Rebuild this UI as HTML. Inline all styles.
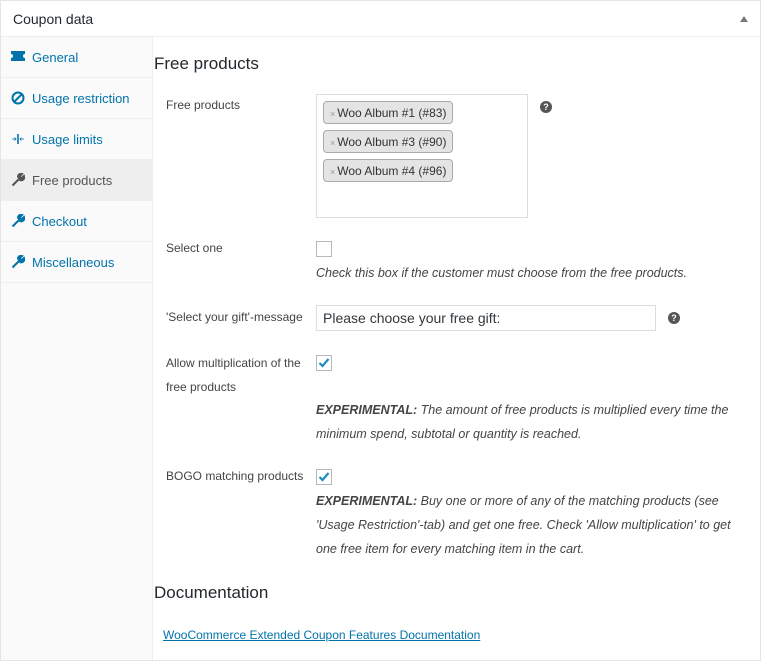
<!DOCTYPE html>
<html><head><meta charset="utf-8"><style>
*{box-sizing:border-box;margin:0;padding:0}
body{width:761px;height:661px;background:#f1f1f1;font-family:"Liberation Sans",sans-serif;color:#444;font-size:12px;position:relative;overflow:hidden}
.box{position:absolute;left:0;top:0;width:761px;height:661px;background:#fff;border:1px solid #e5e5e5}
.hdr{position:absolute;left:0;top:0;width:759px;height:36px;border-bottom:1px solid #eee;font-size:14px;color:#23282d;padding:10px 12px}
.tri{position:absolute;right:12px;top:15px;width:0;height:0;border-left:4px solid transparent;border-right:4px solid transparent;border-bottom:6px solid #777}
.side{position:absolute;left:0;top:36px;width:152px;height:623px;background:#fafafa;border-right:1px solid #eee}
.it{height:41px;border-bottom:1px solid #eee;color:#0073aa;font-size:13px;padding:13px 0 0 31px;position:relative}
.it.act{background:#eee;color:#555}
.it svg{position:absolute;left:10px;top:13px}
.a{position:absolute;white-space:nowrap}
h2{position:absolute;font-size:17px;font-weight:normal;color:#23282d;white-space:nowrap}
.lbl{position:absolute;font-size:12px;color:#444;line-height:24px}
.sel{position:absolute;left:315px;top:93px;width:212px;height:124px;border:1px solid #ddd;background:#fff}
.tag{position:absolute;left:6px;height:23px;border:1px solid #aaa;border-radius:4px;background:#e4e4e4;font-size:12px;color:#333;padding:4px 6px 0 6px;white-space:nowrap}
.tag b{font-weight:normal;color:#999;font-size:9px;margin-right:2px}
.cb{position:absolute;left:315px;width:16px;height:16px;border:1px solid #b4b9be;background:#fff}
.desc{position:absolute;left:315px;font-style:italic;font-size:12.5px;color:#444;line-height:24px;white-space:nowrap}
.desc strong{font-weight:bold}
.q{position:absolute;width:12px;height:12px;border-radius:50%;background:#555;color:#fff;font-size:9px;font-weight:bold;text-align:center;line-height:12px}
input{position:absolute;left:315px;top:304px;width:340px;height:26px;border:1px solid #ddd;font-family:"Liberation Sans",sans-serif;font-size:14px;color:#32373c;padding:0 6px}
</style></head><body>
<div class="box">
<div class="hdr">Coupon data<div class="tri"></div></div>
<div class="side">
<div class="it"><svg width="14" height="12" viewBox="0 0 14 12"><path d="M0 1h14v3a2 2 0 0 0 0 4v3H0V8a2 2 0 0 0 0-4z" fill="#0073aa"/></svg>General</div>
<div class="it"><svg width="14" height="14" viewBox="0 0 14 14"><circle cx="7" cy="7" r="5.5" fill="none" stroke="#0073aa" stroke-width="2"/><path d="M3 11L11 3" stroke="#0073aa" stroke-width="2"/></svg>Usage restriction</div>
<div class="it"><svg width="14" height="14" viewBox="0 0 14 14"><path d="M6.5 2v10M7.5 2v10M1 7h4M9 7h4M3.5 5.5L5 7 3.5 8.5M10.5 5.5L9 7l1.5 1.5" stroke="#0073aa" stroke-width="0.8" fill="none"/></svg>Usage limits</div>
<div class="it act"><svg width="14" height="14" viewBox="0 0 14 14"><path d="M1.5 12.5l6-6M7 3.5a3 3 0 0 1 4-2.5l-2 2 .5 1.5 1.5.5 2-2a3 3 0 0 1-4 4z" stroke="#555" stroke-width="2" fill="#555"/></svg>Free products</div>
<div class="it"><svg width="14" height="14" viewBox="0 0 14 14"><path d="M1.5 12.5l6-6M7 3.5a3 3 0 0 1 4-2.5l-2 2 .5 1.5 1.5.5 2-2a3 3 0 0 1-4 4z" stroke="#0073aa" stroke-width="2" fill="#0073aa"/></svg>Checkout</div>
<div class="it"><svg width="14" height="14" viewBox="0 0 14 14"><path d="M1.5 12.5l6-6M7 3.5a3 3 0 0 1 4-2.5l-2 2 .5 1.5 1.5.5 2-2a3 3 0 0 1-4 4z" stroke="#0073aa" stroke-width="2" fill="#0073aa"/></svg>Miscellaneous</div>
</div>
<h2 style="left:153px;top:53px">Free products</h2>
<div class="lbl" style="left:165px;top:92px">Free products</div>
<div class="sel">
<div class="tag" style="top:6px"><b>×</b>Woo Album #1 (#83)</div>
<div class="tag" style="top:35px"><b>×</b>Woo Album #3 (#90)</div>
<div class="tag" style="top:64px"><b>×</b>Woo Album #4 (#96)</div>
</div>
<div class="q" style="left:539px;top:100px">?</div>
<div class="lbl" style="left:165px;top:235px">Select one</div>
<div class="cb" style="top:240px"></div>
<div class="desc" style="top:260px">Check this box if the customer must choose from the free products.</div>
<div class="lbl" style="left:165px;top:304px">'Select your gift'-message</div>
<input value="Please choose your free gift:">
<div class="q" style="left:667px;top:311px">?</div>
<div class="lbl" style="left:165px;top:350px">Allow multiplication of the<br>free products</div>
<div class="cb" style="top:354px"><svg width="14" height="14" viewBox="0 0 14 14" style="position:absolute;left:0;top:0"><path d="M2.5 7l3 3 6-7" stroke="#1e8cbe" stroke-width="2.2" fill="none"/></svg></div>
<div class="desc" style="top:397px"><strong>EXPERIMENTAL:</strong> The amount of free products is multiplied every time the<br>minimum spend, subtotal or quantity is reached.</div>
<div class="lbl" style="left:165px;top:463px">BOGO matching products</div>
<div class="cb" style="top:468px"><svg width="14" height="14" viewBox="0 0 14 14" style="position:absolute;left:0;top:0"><path d="M2.5 7l3 3 6-7" stroke="#1e8cbe" stroke-width="2.2" fill="none"/></svg></div>
<div class="desc" style="top:488px"><strong>EXPERIMENTAL:</strong> Buy one or more of any of the matching products (see<br>'Usage Restriction'-tab) and get one free. Check 'Allow multiplication' to get<br>one free item for every matching item in the cart.</div>
<h2 style="left:153px;top:582px">Documentation</h2>
<a class="a" style="left:162px;top:627px;color:#0073aa;text-decoration:underline;font-size:12px">WooCommerce Extended Coupon Features Documentation</a>
</div>
</body></html>
